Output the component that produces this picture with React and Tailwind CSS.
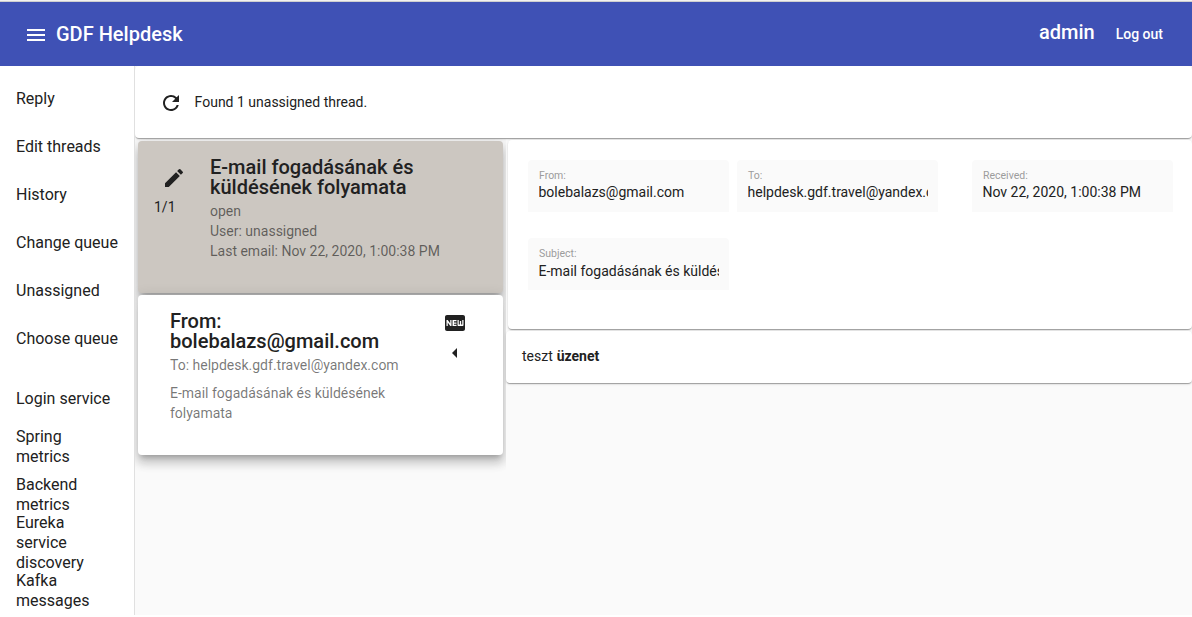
import { MdMenu, MdRefresh, MdEdit, MdFiberNew, MdArrowLeft } from "react-icons/md";

const MENU = ["Reply", "Edit threads", "History", "Change queue", "Unassigned", "Choose queue"];
const SERVICES = ["Login service", "Spring metrics", "Backend metrics", "Eureka service discovery", "Kafka messages"];

const LOW = "shadow-[0_2px_1px_-1px_rgba(0,0,0,0.2),0_1px_1px_0_rgba(0,0,0,0.14),0_1px_3px_0_rgba(0,0,0,0.12)]";
const HIGH = "shadow-[0_5px_5px_-3px_rgba(0,0,0,0.2),0_8px_10px_1px_rgba(0,0,0,0.14),0_3px_14px_2px_rgba(0,0,0,0.12)]";

function NavItem({ label }) {
  return (
    <a className="flex h-12 shrink-0 items-center px-4 text-[16px] leading-5">
      <span>{label}</span>
    </a>
  );
}

function Field({ label, value, className = "", valueClass = "mt-[2px]" }) {
  return (
    <div className={`h-[52px] w-[201px] shrink-0 rounded-t-[4px] bg-[#fafafa] px-[10.5px] pt-[10px] ${className}`}>
      <div className="ml-[0.5px] h-3 text-[10.5px] leading-3 text-[#9c9c9c]">{label}</div>
      <div className={`w-[180px] overflow-hidden text-[14px] leading-4 whitespace-nowrap ${valueClass}`}>{value}</div>
    </div>
  );
}

export default function App() {
  return (
    <div className="flex h-[617px] w-[1192px] flex-col overflow-hidden bg-white font-['Roboto',sans-serif] text-[#212121]">
      <div className="h-0.5 shrink-0 border-b border-[#cfcfcf] bg-[#f2f1f0]" />
      <header className="flex h-16 shrink-0 items-center bg-[#3f51b5] pr-[29px] pl-6 font-medium text-white">
        <MdMenu className="mt-0.5 size-6" />
        <h1 className="ml-2 text-[20px] leading-8 font-medium">GDF Helpdesk</h1>
        <span className="mb-1 ml-auto text-[20px] leading-8">admin</span>
        <span className="ml-[21px] text-[14px] leading-8">Log out</span>
      </header>

      <div className="flex h-[549px] shrink-0">
        <nav className="flex w-[135px] shrink-0 flex-col overflow-hidden border-r border-[#e0e0e0] pt-[9px]">
          {MENU.map((m) => <NavItem key={m} label={m} />)}
          <div className="h-3 shrink-0" />
          {SERVICES.map((m) => <NavItem key={m} label={m} />)}
        </nav>

        <main className="flex min-w-0 flex-1 flex-col overflow-hidden bg-[#fafafa]">
          <section className={`flex h-[72px] shrink-0 items-center rounded-[4px] bg-white pl-6 ${LOW}`}>
            <MdRefresh className="mt-0.5 size-6" />
            <p className="ml-[11.6px] text-[14px] leading-5">Found 1 unassigned thread.</p>
          </section>

          <div className="flex min-h-0 flex-1">
            <div className="mt-px flex w-[371px] shrink-0 flex-col gap-0.5 overflow-hidden pt-0.5 pr-[3px] pl-[3px]">
              <article className={`flex h-[152px] shrink-0 rounded-[4px] bg-[#ccc7c1] pt-4 pl-4 ${HIGH}`}>
                <div className="w-14 shrink-0 pt-[9px]">
                  <MdEdit className="ml-2 size-6" />
                  <div className="mt-[7px] text-[14px] leading-5">1/1</div>
                </div>
                <div>
                  <h2 className="w-[230px] text-[20px] leading-5 font-medium">E-mail fogadásának és küldésének folyamata</h2>
                  <div className="mt-1 text-[14px] leading-5 text-black/54">
                    <div>open</div>
                    <div>User: unassigned</div>
                    <div>Last email: Nov 22, 2020, 1:00:38 PM</div>
                  </div>
                </div>
              </article>
              <article className={`flex h-[160px] shrink-0 rounded-[4px] bg-white pt-4 pl-8 ${HIGH}`}>
                <div className="w-[273px]">
                  <h2 className="w-[230px] text-[20px] leading-5 font-medium">From: bolebalazs@gmail.com</h2>
                  <div className="mt-1 text-[14px] leading-5 text-black/54">To: helpdesk.gdf.travel@yandex.com</div>
                  <div className="mt-2 w-[230px] text-[14px] leading-5 text-black/54">E-mail fogadásának és küldésének folyamata</div>
                </div>
                <div className="flex flex-col gap-[6px]">
                  <MdFiberNew className="size-6" />
                  <MdArrowLeft className="size-6" />
                </div>
              </article>
            </div>

            <div className="min-w-0 flex-1 pt-0.5">
              <section className={`ml-0.5 h-[189px] rounded-[4px] bg-white pt-5 pl-5 ${LOW}`}>
                <div className="flex">
                  <Field label="From:" value="bolebalazs@gmail.com" />
                  <Field label="To:" value="helpdesk.gdf.travel@yandex.com" className="ml-2" />
                  <Field label="Received:" value="Nov 22, 2020, 1:00:38 PM" className="ml-[34px]" />
                </div>
                <div className="mt-[26px] flex">
                  <Field label="Subject:" value="E-mail fogadásának és küldésének folyamata" valueClass="mt-[3px]" />
                </div>
              </section>
              <section className={`mt-0.5 h-[52px] rounded-[4px] bg-white px-4 py-4 text-[14px] leading-[18px] ${LOW}`}>
                teszt <b className="ml-[0.4px] font-bold">üzenet</b>
              </section>
            </div>
          </div>
        </main>
      </div>
    </div>
  );
}
